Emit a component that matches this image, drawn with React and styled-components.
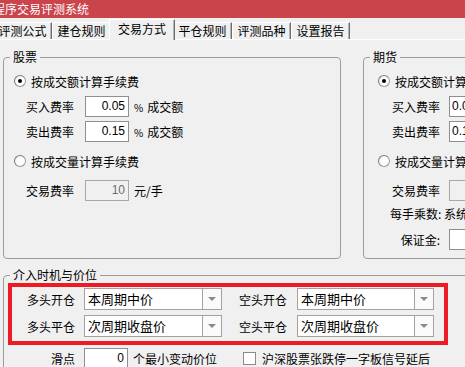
import React from "react";
import styled, { createGlobalStyle } from "styled-components";

const GlobalStyle = createGlobalStyle`
  html, body {
    margin: 0;
    padding: 0;
    background: #f0f0f0;
  }
  body {
    font-family: "Noto Sans CJK SC", "Liberation Sans", sans-serif;
    font-size: 12px;
    color: #000;
  }
`;

const Window = styled.div`
  width: 465px;
  height: 367px;
  overflow: hidden;
  background: #f0f0f0;
`;

// Title bar
const TitleBar = styled.div`
  height: 18px;
  line-height: 18px;
  background: #c9444b;
  color: #fff;
  font-size: 12px;
  white-space: nowrap;
  text-indent: -7px;
`;

// Tabs
const TabBar = styled.div`
  display: flex;
  align-items: flex-end;
  height: 21px;
  margin-left: -7px;
`;

const Tab = styled.div`
  position: relative;
  box-sizing: border-box;
  flex-shrink: 0;
  width: ${(p) => (p.$active ? 66 : 59)}px;
  height: ${(p) => (p.$active ? 21 : 17)}px;
  margin: 0 ${(p) => (p.$active ? -2 : 0)}px ${(p) => (p.$active ? -1 : 0)}px;
  border-top: 1px solid #fff;
  border-left: 1px solid #fff;
  border-right: 1px solid #6e6e6e;
  box-shadow: inset -1px 0 0 #b4b4b4;
  background: #f0f0f0;
  z-index: ${(p) => (p.$active ? 1 : 0)};
  text-align: center;
  line-height: ${(p) => (p.$active ? 18 : 15)}px;
  white-space: nowrap;
`;

const Panel = styled.div`
  border-top: 1px solid #fff;
  padding: 9px 0 0 3px;
`;

const TopRow = styled.div`
  display: flex;
  gap: 22px;
`;

// Group boxes
const GroupBox = styled.fieldset`
  box-sizing: border-box;
  flex-shrink: 0;
  min-width: 0;
  width: ${(p) => p.$w}px;
  height: ${(p) => p.$h}px;
  margin: ${(p) => p.$mt || 0}px 0 0;
  padding: 0;
  border: 1px solid #9c9c9c;
  border-radius: 4px;
`;

const Legend = styled.legend`
  margin-left: 6px;
  padding: 0 3px;
  line-height: 16px;
  font-size: 12px;
`;

const GroupBody = styled.div`
  display: flex;
  flex-direction: column;
  padding: ${(p) => p.$pad};
`;

// Radio option row
const RadioRow = styled.div`
  display: flex;
  align-items: center;
  height: 20px;
  margin-top: ${(p) => p.$mt}px;
  white-space: nowrap;
`;

const RadioDot = styled.span`
  box-sizing: border-box;
  position: relative;
  width: 12px;
  height: 12px;
  margin-right: 5px;
  border-radius: 50%;
  border: 1px solid #9a9a9a;
  border-top-color: #7c7c7c;
  border-left-color: #7c7c7c;
  background: radial-gradient(circle at 60% 60%, #ffffff 40%, #e6e6e6 100%);
  flex-shrink: 0;
  &::after {
    content: "";
    display: ${(p) => (p.$checked ? "block" : "none")};
    position: absolute;
    left: 3px;
    top: 3px;
    width: 4px;
    height: 4px;
    border-radius: 50%;
    background: #000;
  }
`;

// Label + input rows
const FieldRow = styled.div`
  display: flex;
  align-items: center;
  height: ${(p) => p.$h || 21}px;
  margin-top: ${(p) => p.$mt}px;
  margin-left: ${(p) => p.$ml}px;
  white-space: nowrap;
`;

const FieldLabel = styled.span`
  flex-shrink: 0;
  width: ${(p) => p.$w}px;
  margin-right: ${(p) => p.$gap}px;
  text-align: ${(p) => p.$align || "left"};
`;

const TextBox = styled.div`
  box-sizing: border-box;
  flex-shrink: 0;
  width: 44px;
  height: 21px;
  line-height: 19px;
  border: 1px solid ${(p) => (p.$disabled ? "#a8a8a8" : "#8f8f8f")};
  background: ${(p) => (p.$disabled ? "#f0f0f0" : "#fff")};
  color: ${(p) => (p.$disabled ? "#6d6d6d" : "#000")};
  text-align: ${(p) => p.$align || "right"};
  padding: 0 3px 0 2px;
  font-family: "Liberation Sans", sans-serif;
  font-size: 12px;
`;

const Unit = styled.span`
  margin-left: 5px;
  white-space: nowrap;
`;

const Percent = styled.span`
  font-size: 10px;
  margin-right: 4px;
`;

const PlainText = styled.div`
  height: 16px;
  line-height: 16px;
  margin-top: ${(p) => p.$mt}px;
  margin-left: ${(p) => p.$ml}px;
  white-space: nowrap;
`;

// Entry timing section
const RedFrame = styled.div`
  box-sizing: border-box;
  width: 440px;
  border: 4px solid #ed1c24;
  padding: 1px 10px 4px 15px;
  display: grid;
  grid-template-columns: 57px 138px 75px 137px;
  row-gap: 5px;
  align-items: center;
`;

const ComboLabel = styled.span`
  text-align: right;
  padding-right: ${(p) => p.$pr}px;
  white-space: nowrap;
`;

const Combo = styled.div`
  box-sizing: border-box;
  display: flex;
  height: 22px;
  border: 1px solid #a2a2a2;
  background: #fff;
`;

const ComboText = styled.span`
  flex: 1;
  padding-left: 3px;
  line-height: 20px;
  font-size: 13px;
  white-space: nowrap;
  overflow: hidden;
`;

const ComboButton = styled.span`
  width: 18px;
  border-left: 1px solid #a2a2a2;
  display: flex;
  align-items: center;
  justify-content: center;
  background: #fafafa;
  &::after {
    content: "";
    border-left: 4px solid transparent;
    border-right: 4px solid transparent;
    border-top: 4px solid #8a8a8a;
  }
`;

const BottomRow = styled.div`
  display: flex;
  align-items: center;
  height: 21px;
  margin-top: 3px;
  margin-left: 19px;
  white-space: nowrap;
`;

const CheckBox = styled.span`
  box-sizing: border-box;
  width: 13px;
  height: 13px;
  margin: 0 6px 0 26px;
  border: 1px solid #8a8a8a;
  background: #fff;
  flex-shrink: 0;
`;

const tabs = ["评测公式", "建仓规则", "交易方式", "平仓规则", "评测品种", "设置报告"];

const comboRows = [
  ["多头开仓", "本周期中价", "空头开仓", "本周期中价"],
  ["多头平仓", "次周期收盘价", "空头平仓", "次周期收盘价"],
];

const ComboBox = ({ value }) => (
  <Combo>
    <ComboText>{value}</ComboText>
    <ComboButton />
  </Combo>
);

export default function App() {
  return (
    <Window>
      <GlobalStyle />
      <TitleBar>程序交易评测系统</TitleBar>
      <TabBar>
        {tabs.map((t, i) => (
          <Tab key={t} $active={i === 2}>
            {t}
          </Tab>
        ))}
      </TabBar>
      <Panel>
        <TopRow>
          <GroupBox $w={338} $h={210}>
            <Legend>股票</Legend>
            <GroupBody $pad="6px 0 0 10px">
              <RadioRow $mt={0}>
                <RadioDot $checked />
                按成交额计算手续费
              </RadioRow>
              <FieldRow $mt={5} $ml={12}>
                <FieldLabel $w={48} $gap={11}>买入费率</FieldLabel>
                <TextBox>0.05</TextBox>
                <Unit><Percent>%</Percent>成交额</Unit>
              </FieldRow>
              <FieldRow $mt={4} $ml={12}>
                <FieldLabel $w={48} $gap={11}>卖出费率</FieldLabel>
                <TextBox>0.15</TextBox>
                <Unit><Percent>%</Percent>成交额</Unit>
              </FieldRow>
              <RadioRow $mt={9}>
                <RadioDot />
                按成交量计算手续费
              </RadioRow>
              <FieldRow $mt={9} $ml={12}>
                <FieldLabel $w={48} $gap={11}>交易费率</FieldLabel>
                <TextBox $disabled>10</TextBox>
                <Unit>元/手</Unit>
              </FieldRow>
            </GroupBody>
          </GroupBox>

          <GroupBox $w={200} $h={210}>
            <Legend>期货</Legend>
            <GroupBody $pad="6px 0 0 14px">
              <RadioRow $mt={0}>
                <RadioDot $checked />
                按成交额计算手续费
              </RadioRow>
              <FieldRow $mt={5} $ml={12}>
                <FieldLabel $w={50} $gap={9} $align="right">买入费率</FieldLabel>
                <TextBox $align="left">0.05</TextBox>
              </FieldRow>
              <FieldRow $mt={4} $ml={12}>
                <FieldLabel $w={50} $gap={9} $align="right">卖出费率</FieldLabel>
                <TextBox $align="left">0.15</TextBox>
              </FieldRow>
              <RadioRow $mt={9}>
                <RadioDot />
                按成交量计算手续费
              </RadioRow>
              <FieldRow $mt={9} $ml={12}>
                <FieldLabel $w={50} $gap={9} $align="right">交易费率</FieldLabel>
                <TextBox $disabled $align="left"></TextBox>
              </FieldRow>
              <PlainText $mt={5} $ml={12}>每手乘数: 系统设定</PlainText>
              <FieldRow $mt={7} $ml={12}>
                <FieldLabel $w={50} $gap={9} $align="right">保证金:</FieldLabel>
                <TextBox $align="left"></TextBox>
              </FieldRow>
            </GroupBody>
          </GroupBox>
        </TopRow>

        <GroupBox $w={480} $h={120} $mt={8}>
          <Legend>介入时机与价位</Legend>
          <GroupBody $pad="0 0 0 4px">
            <RedFrame>
              {comboRows.map((r) => (
                <React.Fragment key={r[0]}>
                  <ComboLabel $pr={9}>{r[0]}</ComboLabel>
                  <ComboBox value={r[1]} />
                  <ComboLabel $pr={10}>{r[2]}</ComboLabel>
                  <ComboBox value={r[3]} />
                </React.Fragment>
              ))}
            </RedFrame>
            <BottomRow>
              <FieldLabel $w={48} $gap={9} $align="right">滑点</FieldLabel>
              <TextBox>0</TextBox>
              <Unit>个最小变动价位</Unit>
              <CheckBox />
              沪深股票张跌停一字板信号延后
            </BottomRow>
          </GroupBody>
        </GroupBox>
      </Panel>
    </Window>
  );
}
